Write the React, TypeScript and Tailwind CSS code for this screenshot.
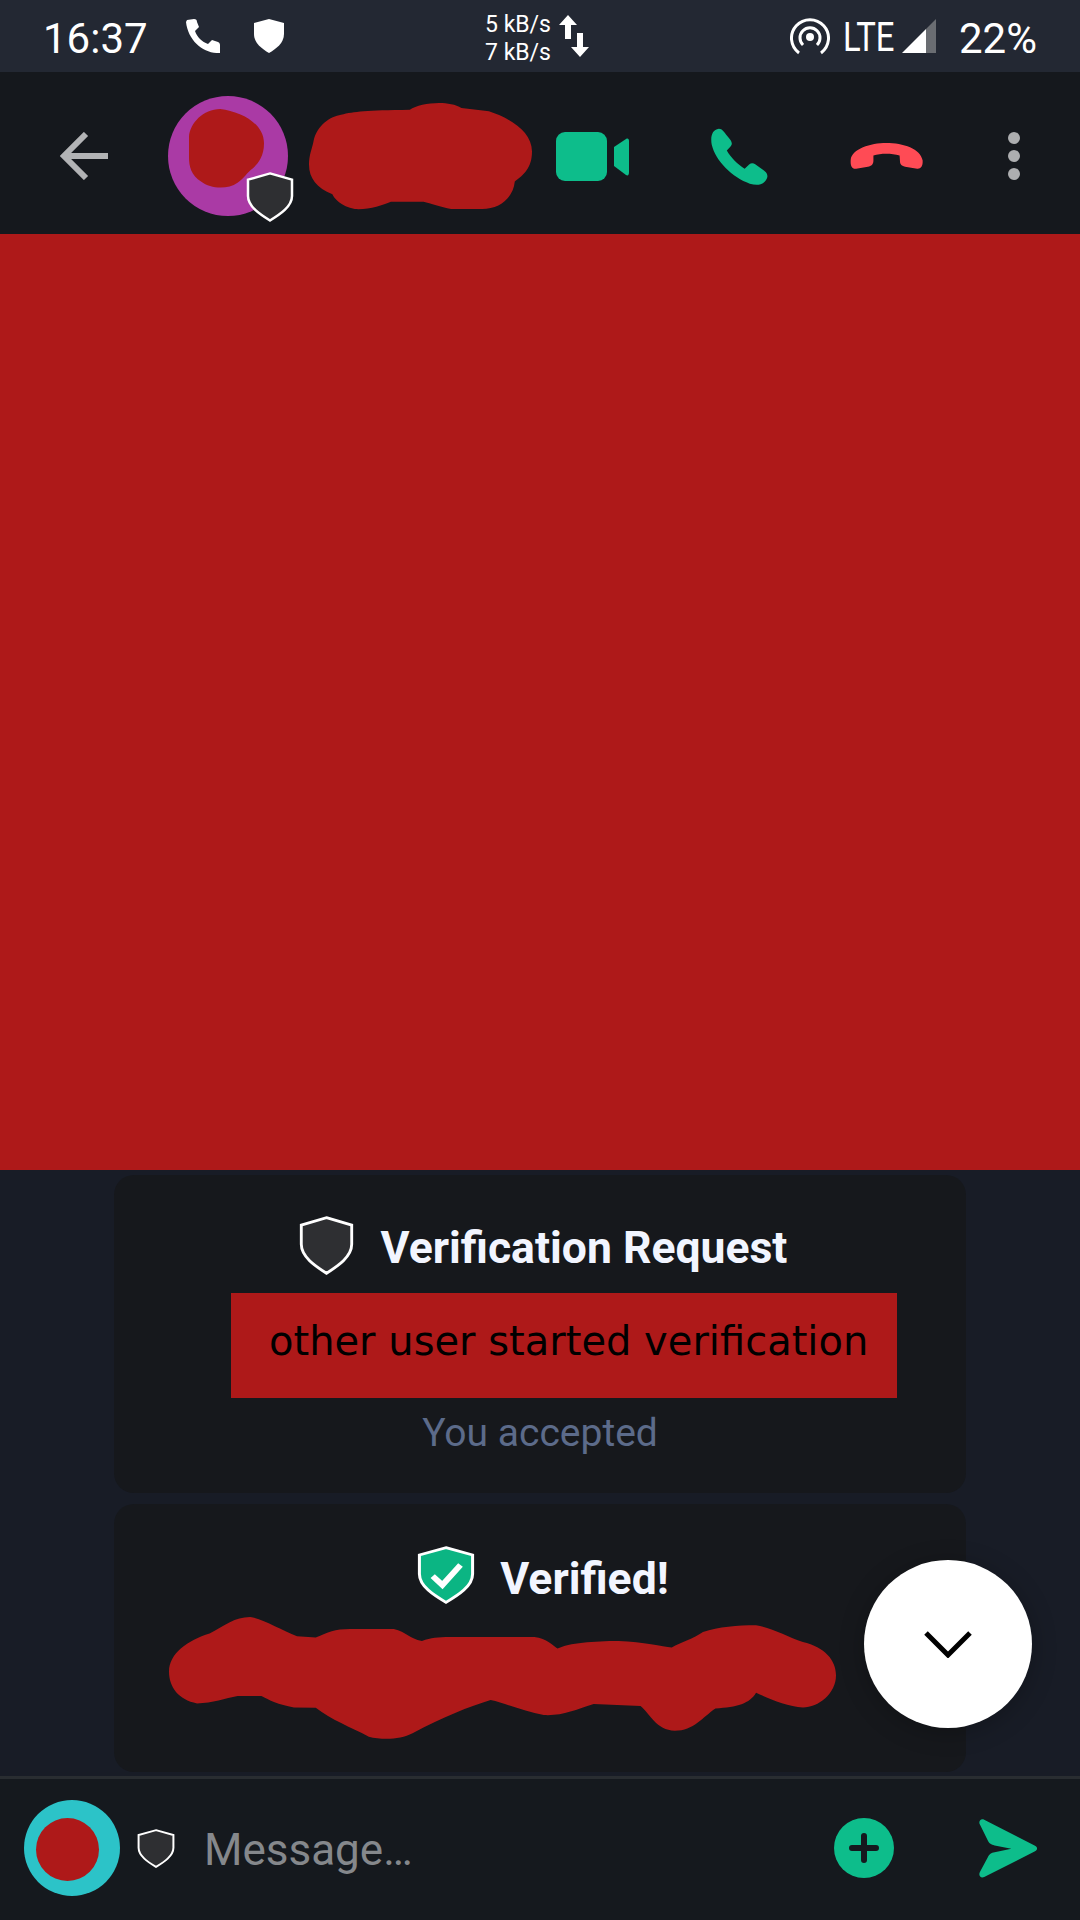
function Shield({ className, green }: { className: string; green?: boolean }) {
    return (
        <svg viewBox="0 0 48 52" preserveAspectRatio="none" className={className}>
            <path
                d="M24 1.5 L46 8 V25 C46 36 34 44 24 50.5 C14 44 2 36 2 25 V8 Z"
                fill={green ? '#0bb583' : '#2e2f32'}
                stroke="#ffffff"
                strokeWidth="2.5"
            />
            {green && <path d="M13 27 L21 35 L36 17" fill="none" stroke="#ffffff" strokeWidth="5" />}
        </svg>
    );
}

function StatusBar() {
    return (
        <div className="flex h-[72px] shrink-0 items-center bg-[#232833] pl-[43px] text-[42px] text-white">
            <span className="mt-[5px] w-[105px] leading-none">16:37</span>
            <svg viewBox="0 0 34 34" className="ml-[38px] h-[34px] w-[34px] fill-white">
                <path d="M1 1 L8 0 C10 0 11 1 11 3 L13 8 L9 12 C11 18 16 23 22 25 L26 21 L32 23 C34 24 34 25 34 27 V34 C18 35 2 22 0 3 Z" />
            </svg>
            <svg viewBox="0 0 30 34" className="ml-[34px] h-[34px] w-[30px] fill-white">
                <path d="M15 0 L30 4 V15 C30 24 22 30 15 34 C8 30 0 24 0 15 V4 Z" />
            </svg>
            <div className="mt-[6px] ml-[201px] flex w-[71px] flex-col text-[23px] leading-[28px]">
                <span>5 kB/s</span>
                <span>7 kB/s</span>
            </div>
            <svg viewBox="0 0 30 42" className="ml-[3px] h-[42px] w-[30px] fill-white">
                <path d="M9 0 L18 10 H12 V24 H6 V10 H0 Z" />
                <path d="M21 42 L30 32 H24 V18 H18 V32 H12 Z" />
            </svg>
            <svg viewBox="0 0 40 38" fill="none" stroke="#ffffff" strokeWidth="3" className="ml-[201px] h-[38px] w-[40px]">
                <path d="M9 36 A18.5 18.5 0 1 1 31 36" />
                <path d="M13 28 A10 10 0 1 1 27 28" />
                <circle cx="20" cy="20" r="4" fill="#ffffff" stroke="none" />
            </svg>
            <span className="mt-[3px] ml-[13px] w-[49px] origin-left scale-x-[0.82] text-[40px] leading-none whitespace-nowrap">LTE</span>
            <svg viewBox="0 0 34 34" className="ml-[10px] h-[34px] w-[34px]">
                <path d="M24 34 H0 L24 10 Z" fill="#ffffff" />
                <path d="M24 34 V10 L34 0 V34 Z" fill="#6a6d72" />
            </svg>
            <span className="mt-[5px] ml-[23px] leading-none">22%</span>
        </div>
    );
}

function Header() {
    return (
        <div className="flex h-[162px] shrink-0 items-center bg-[#15181d] pt-[6px] pl-[60px]">
            <svg viewBox="0 0 48 48" fill="none" stroke="#b2b3b5" strokeWidth="6" className="h-[48px] w-[48px]">
                <path d="M48 24 H4 M26 2 L4 24 L26 46" />
            </svg>
            <div className="relative ml-[60px] flex h-[120px] w-[120px] items-center justify-center rounded-full bg-[#aa3aa5]">
                <svg viewBox="549 327 218 237" preserveAspectRatio="none" className="absolute top-[13px] left-[21px] h-[79px] w-[75px]">
                    <path
                        fill="#ae1919"
                        d="M640 327 C700 335 767 370 767 430 C767 470 750 490 735 505 C715 520 710 535 690 548 C660 570 610 565 585 545 C555 525 549 500 549 470 L549 410 C552 370 590 327 640 327 Z"
                    />
                </svg>
                <Shield className="absolute top-[76px] left-[78px] h-[50px] w-[48px]" />
            </div>
            <svg viewBox="897 302 648 323" preserveAspectRatio="none" className="ml-[21px] h-[108px] w-[223px]">
                <path
                    fill="#ae1919"
                    d="M1190 325 C1220 305 1300 295 1340 320 L1420 330 C1480 350 1545 390 1545 450 C1545 500 1520 520 1495 540 C1490 590 1450 622 1400 622 L1310 622 C1280 615 1250 605 1230 600 L1135 600 C1110 610 1070 625 1030 622 C990 615 970 590 965 578 C920 560 897 530 897 490 C897 460 905 445 910 420 C920 370 960 345 990 340 C1030 330 1060 327 1190 325 Z"
                />
            </svg>
            <svg viewBox="0 0 73 49" className="ml-[24px] h-[49px] w-[73px] fill-[#0dbd8b]">
                <rect x="0" y="0" width="51" height="49" rx="9" />
                <path d="M58 15 L70 7 C72 6 73 7 73 9 V40 C73 43 72 44 70 43 L58 34 Z" />
            </svg>
            <svg viewBox="497 380 166 172" preserveAspectRatio="none" className="ml-[82px] h-[57px] w-[57px]">
                <path
                    fill="#0dbd8b"
                    d="M520 382 C530 382 535 392 545 405 C558 420 562 428 552 438 L543 448 C555 470 575 490 595 503 L608 490 C618 482 625 488 640 500 C655 510 665 518 660 532 C652 552 632 555 610 548 C560 530 510 480 499 430 C495 405 500 385 520 382 Z"
                />
            </svg>
            <svg viewBox="900 428 212 77" preserveAspectRatio="none" className="ml-[82px] h-[26px] w-[73px]">
                <path
                    fill="#ff4b55"
                    d="M902 478 C905 445 960 428 1005 428 C1055 428 1105 445 1111 480 C1112 498 1105 505 1095 504 L1060 498 C1048 496 1045 490 1045 480 L1044 465 C1020 458 990 458 968 465 L968 480 C968 492 962 497 952 498 L918 504 C905 505 901 495 902 478 Z"
                />
            </svg>
            <div className="ml-[85px] flex flex-col gap-[6px]">
                <div className="h-[12px] w-[12px] rounded-full bg-[#adaeb0]" />
                <div className="h-[12px] w-[12px] rounded-full bg-[#adaeb0]" />
                <div className="h-[12px] w-[12px] rounded-full bg-[#adaeb0]" />
            </div>
        </div>
    );
}

function Timeline() {
    return (
        <div className="relative flex h-[606px] shrink-0 flex-col gap-[11px] bg-[#181c26] pt-[5px] pl-[114px]">
            {/* Verification request */}
            <div className="flex h-[318px] w-[852px] flex-col rounded-[20px] bg-[#16181c] pt-[41px]">
                <div className="flex h-[59px] items-start justify-center pl-[6px]">
                    <Shield className="h-[59px] w-[55px]" />
                    <span className="mt-[3px] ml-[27px] text-[44.5px] leading-[59px] font-bold text-[#f2f5ff]">Verification Request</span>
                </div>
                <div className="mt-[18px] ml-[117px] flex h-[105px] w-[666px] items-center bg-[#ae1919] pb-[10px] pl-[38px] font-['DejaVu_Sans',sans-serif] text-[40px] leading-none text-black">
                    other user started verification
                </div>
                <span className="mt-[14px] text-center text-[39px] leading-[42px] text-[#5c6b8a]">You accepted</span>
            </div>

            {/* Verified */}
            <div className="flex h-[268px] w-[852px] flex-col rounded-[20px] bg-[#16181c] pt-[42px]">
                <div className="flex h-[58px] items-start justify-center pl-[6px]">
                    <Shield green className="h-[58px] w-[58px]" />
                    <span className="mt-[4px] ml-[25px] text-[44.5px] leading-[58px] font-bold text-[#f2f5ff]">Verified!</span>
                </div>
                <svg viewBox="110 380 1068 370" preserveAspectRatio="none" className="mt-[13px] ml-[55px] h-[123px] w-[667px]">
                    <path
                        fill="#ae1919"
                        d="M240 380 C260 385 290 420 315 438 L345 442 C365 425 375 416 400 416 L470 416 C490 425 495 445 515 452 C530 442 540 440 560 440 L695 440 C715 445 725 465 732 475 C750 458 790 452 830 452 C870 455 900 468 915 472 C930 455 950 445 965 425 C990 410 1020 405 1050 405 C1075 412 1100 440 1125 455 C1160 470 1178 510 1178 555 C1178 610 1150 652 1125 652 C1100 650 1070 625 1050 608 C1040 640 1020 652 985 655 C965 680 950 722 920 722 C890 722 880 670 865 648 L790 642 C760 660 740 678 710 675 C680 665 650 640 625 630 C590 650 550 680 500 730 C480 750 450 750 430 740 C400 710 370 690 345 653 L310 652 C285 645 270 630 258 618 L220 618 C200 625 180 640 155 640 C125 630 110 590 110 545 C110 490 140 450 175 430 C200 405 215 380 240 380 Z"
                    />
                </svg>
            </div>

            {/* Scroll to bottom */}
            <div className="absolute top-[390px] right-[48px] flex h-[168px] w-[168px] items-center justify-center rounded-full bg-white shadow-[0_4px_24px_rgba(0,0,0,0.25)]">
                <svg viewBox="0 0 48 27" fill="none" stroke="#000000" strokeWidth="5" className="h-[27px] w-[48px]">
                    <path d="M2 2 L24 24 L46 2" />
                </svg>
            </div>
        </div>
    );
}

function Composer() {
    return (
        <div className="flex flex-1 items-center border-t-[3px] border-[#292d31] bg-[#15191e] pb-[3px] pl-[24px]">
            <div className="relative h-[96px] w-[96px] rounded-full bg-[#2cc3c8]">
                <div className="absolute top-[18px] left-[12px] h-[63px] w-[63px] rounded-full bg-[#ae1919]" />
            </div>
            <Shield className="ml-[17px] h-[39px] w-[38px]" />
            <span className="mt-[3px] ml-[29px] w-[211px] text-[44px] leading-none whitespace-nowrap text-[#85888c]">Message…</span>
            <div className="ml-[419px] flex h-[60px] w-[60px] items-center justify-center rounded-full bg-[#0dbd8b]">
                <svg viewBox="0 0 30 30" fill="none" stroke="#15191e" strokeWidth="6" strokeLinecap="round" className="h-[30px] w-[30px]">
                    <path d="M15 3 V27 M3 15 H27" />
                </svg>
            </div>
            <svg viewBox="1275 178 167 172" preserveAspectRatio="none" className="ml-[85px] h-[59px] w-[58px]">
                <path
                    fill="#0dbd8b"
                    d="M1290 180 L1435 255 C1445 260 1445 268 1435 273 L1290 347 C1280 352 1272 342 1278 332 L1300 290 C1305 280 1310 277 1320 275 L1368 265 L1320 255 C1310 253 1305 250 1300 240 L1278 195 C1272 185 1280 175 1290 180 Z"
                />
            </svg>
        </div>
    );
}

export default function App() {
    return (
        <div className="flex h-[1920px] w-[1080px] flex-col overflow-hidden font-['Roboto',sans-serif]">
            <StatusBar />
            <Header />
            <div className="h-[936px] shrink-0 bg-[#ae1919]" />
            <Timeline />
            <Composer />
        </div>
    );
}
